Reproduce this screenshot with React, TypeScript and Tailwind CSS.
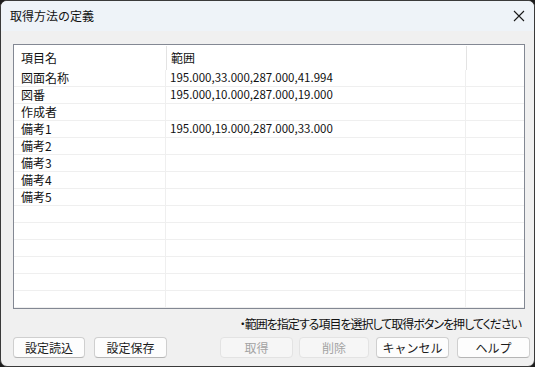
import React from "react";

const rows: [string, string][] = [
  ["図面名称", "195.000,33.000,287.000,41.994"],
  ["図番", "195.000,10.000,287.000,19.000"],
  ["作成者", ""],
  ["備考1", "195.000,19.000,287.000,33.000"],
  ["備考2", ""],
  ["備考3", ""],
  ["備考4", ""],
  ["備考5", ""],
  ["", ""],
  ["", ""],
  ["", ""],
  ["", ""],
  ["", ""],
  ["", ""],
];

function Btn({ label, w, ml, disabled }: { label: string; w: string; ml: string; disabled?: boolean }) {
  return (
    <div
      className={
        "h-[21px] flex items-center justify-center rounded-[4px] border text-[12px] leading-none " +
        w +
        " " +
        ml +
        " " +
        (disabled
          ? "border-[#e3e3e3] bg-[#f6f6f6] text-[#a3a3a3]"
          : "border-[#cfcfcf] border-b-[#b5b5b5] bg-[#fdfdfd] text-[#1b1b1b]")
      }
    >
      {label}
    </div>
  );
}

export default function App() {
  return (
    <div className="w-[535px] h-[367px] bg-[#1c1c1c] font-['Noto_Sans_CJK_JP',sans-serif]">
      <div className="w-full h-full rounded-[7px] border border-[#3a3a3a] overflow-hidden bg-[#f0f0f0] flex flex-col">
        <div className="h-[30px] shrink-0 bg-[#eef3f8] flex items-center pl-[9px] pr-[8px] justify-between">
          <span className="text-[12px] text-[#111] leading-none">取得方法の定義</span>
          <svg width="12" height="12" viewBox="0 0 12 12" className="mr-[1px]">
            <path d="M1 1 L11 11 M11 1 L1 11" stroke="#1a1a1a" strokeWidth="1.1" fill="none" />
          </svg>
        </div>
        <div className="pt-[13px] pl-[12px]">
          <div className="w-[512px] h-[265px] border border-[#838893] bg-white flex flex-col overflow-hidden">
            <div className="h-[25px] flex text-[12px] text-[#111]">
              <div className="w-[152px] flex items-center pl-[7px]">項目名</div>
              <div className="w-[1px] mt-[1px] bg-[#e3e3e3]" />
              <div className="w-[299px] flex items-center pl-[4px]">範囲</div>
              <div className="w-[1px] mt-[1px] bg-[#e3e3e3]" />
              <div className="flex-1" />
            </div>
            {rows.map(([name, range], i) => (
              <div key={i} className="h-[17px] shrink-0 flex border-b border-[#efefef] text-[#111]">
                <div className="w-[151px] flex items-center pl-[7px] text-[12px] leading-none">{name}</div>
                <div className="w-[1px] bg-[#efefef]" />
                <div className="w-[299px] flex items-center pl-[4px] text-[11.5px] leading-none">{range}</div>
                <div className="w-[1px] bg-[#efefef]" />
                <div className="flex-1" />
              </div>
            ))}
          </div>
        </div>
        <div className="h-[16px] mt-[7px] flex items-center justify-end pr-[13px] text-[12px] leading-none tracking-[-1px] text-[#111] [font-feature-settings:'palt']">
          ・範囲を指定する項目を選択して取得ボタンを押してください
        </div>
        <div className="flex mt-[5px]">
          <Btn label="設定読込" w="w-[72px]" ml="ml-[12px]" />
          <Btn label="設定保存" w="w-[73px]" ml="ml-[9px]" />
          <Btn label="取得" w="w-[73px]" ml="ml-[53px]" disabled />
          <Btn label="削除" w="w-[70px]" ml="ml-[6px]" disabled />
          <Btn label="キャンセル" w="w-[73px]" ml="ml-[7px]" />
          <Btn label="ヘルプ" w="w-[73px]" ml="ml-[8px]" />
        </div>
      </div>
    </div>
  );
}
